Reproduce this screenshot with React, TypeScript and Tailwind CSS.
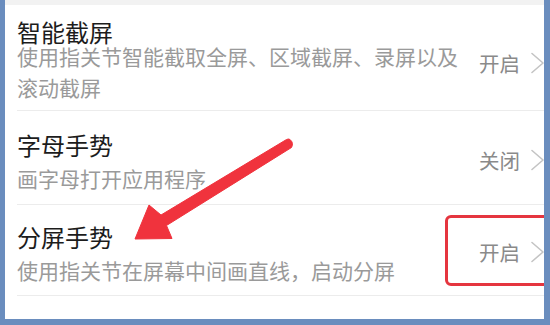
import React from "react";

const font = { fontFamily: '"Noto Sans CJK SC", "Noto Sans", sans-serif' };

function Chevron() {
  return (
    <svg width="16" height="22" viewBox="0 0 16 22" className="ml-[10px] shrink-0" fill="none">
      <path d="M2 1.5 L13 11 L2 20.5" stroke="#c4c4c4" strokeWidth="1.6" strokeLinecap="round" strokeLinejoin="round" />
    </svg>
  );
}

function Value({ text, extra }: { text: string; extra?: string }) {
  return (
    <div className={"flex items-center w-[65px] shrink-0 " + (extra ?? "")}>
      <span className="text-[20.5px] leading-[24px] text-[#8a8a8a] whitespace-nowrap">{text}</span>
      <Chevron />
    </div>
  );
}

export default function App() {
  return (
    <div className="relative w-[550px] h-[325px] bg-[#6a8dbe] pl-[5px] pr-[6px] pb-[6px] flex flex-col" style={font}>
      <div className="relative flex-1 bg-white overflow-hidden flex flex-col">
        <div className="h-[5px] bg-[#f2f2f2] shrink-0" />

        <div className="pl-[12px]">
          <div className="flex items-center border-b border-[#ececec] pt-[18px] pb-[7px]">
            <div className="flex-1 min-w-0 pr-[10px]">
              <div className="text-[24px] leading-[18px] text-[#1c1c1c]">智能截屏</div>
              <div className="text-[21px] leading-[31px] text-[#9a9a9a]">
                使用指关节智能截取全屏、区域截屏、录屏以及滚动截屏
              </div>
            </div>
            <Value text="开启" />
          </div>
        </div>

        <div className="pl-[12px]">
          <div className="flex items-center border-b border-[#ececec] pt-[22px] pb-[14px]">
            <div className="flex-1 min-w-0 pr-[10px]">
              <div className="text-[24px] leading-[24px] text-[#1c1c1c]">字母手势</div>
              <div className="mt-[9px] text-[21px] leading-[24px] text-[#9a9a9a]">画字母打开应用程序</div>
            </div>
            <Value text="关闭" extra="pb-[3px]" />
          </div>
        </div>

        <div className="pl-[12px]">
          <div className="flex items-center border-b border-[#ececec] pt-[20px] pb-[13px]">
            <div className="flex-1 min-w-0 pr-[10px]">
              <div className="text-[24px] leading-[24px] text-[#1c1c1c]">分屏手势</div>
              <div className="mt-[9px] text-[21px] leading-[24px] text-[#9a9a9a]">使用指关节在屏幕中间画直线，启动分屏</div>
            </div>
            <Value text="开启" extra="pb-[4px]" />
          </div>
        </div>

        <div className="absolute left-[440px] top-[215px] w-[130px] h-[71px] border-[3px] border-[#e5353f] rounded-[6px]" />
      </div>

      <svg className="absolute left-0 top-0 pointer-events-none" width="550" height="325" viewBox="0 0 550 325">
        <path
          d="M286.5 139.5 L161 215 L149 205 L135 239 L172 238.5 L166.5 225.5 L291.5 147.5 Q294 143 290 139.5 Q288.5 138.5 286.5 139.5 Z"
          fill="#f0333d"
          stroke="#f0333d"
          strokeWidth="1"
          strokeLinejoin="round"
        />
      </svg>
    </div>
  );
}
